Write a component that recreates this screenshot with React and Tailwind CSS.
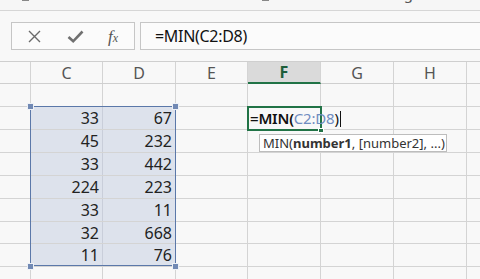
import React from "react";

const cols = [
  { k: "C", w: "w-[72px]" },
  { k: "D", w: "w-[73px]" },
  { k: "E", w: "w-[72px]" },
  { k: "F", w: "w-[73px]" },
  { k: "G", w: "w-[73px]" },
  { k: "H", w: "w-[73px]" },
];

const data = [
  null,
  ["33", "67"],
  ["45", "232"],
  ["33", "442"],
  ["224", "223"],
  ["33", "11"],
  ["32", "668"],
  ["11", "76"],
  null,
];

const rowH = [
  "h-[23px]",
  "h-[23px]",
  "h-[23px]",
  "h-[23px]",
  "h-[23px]",
  "h-[23px]",
  "h-[22px]",
  "h-[23px]",
  "h-[23px]",
];

function Row({ i }) {
  const d = data[i];
  const sel = i >= 1 && i <= 7;
  return (
    <div className={`flex ${rowH[i]} border-b border-[#d4d4d4]`}>
      <div className="w-[31px] shrink-0 border-r border-[#d4d4d4]" />
      {cols.map((c, ci) => {
        const inSel = sel && ci < 2;
        return (
          <div
            key={c.k}
            className={`${c.w} shrink-0 border-r ${
              inSel ? "bg-[#dde2ec] border-[#c9ceda]" : "border-[#d4d4d4]"
            } flex items-center justify-end pr-[3px] text-[16px] leading-none text-[#222]`}
          >
            {inSel ? d[ci] : ""}
          </div>
        );
      })}
      <div className="flex-1" />
    </div>
  );
}

export default function App() {
  return (
    <div
      className="relative w-[480px] h-[279px] overflow-hidden bg-[#f8f8f8] text-[#222]"
      style={{ fontFamily: '"Noto Sans", "Open Sans", sans-serif' }}
    >
      {/* ribbon bottom */}
      <div className="relative h-[11px] border-b border-[#d6d6d6] bg-[#f6f6f6] overflow-hidden">
        <div className="flex items-end h-full -mt-[9px]">
          <div className="w-[22px]" />
          <div className="w-[7px] h-[7px] border-r border-b border-[#888]" />
          <div className="w-[101px]" />
          <span className="text-[15px] leading-none text-[#555]">Font</span>
          <div className="w-[100px]" />
          <div className="w-[7px] h-[7px] border-r border-b border-[#888]" />
          <div className="w-[118px]" />
          <span className="text-[15px] leading-none text-[#555]">Alignment</span>
        </div>
      </div>
      {/* formula bar */}
      <div className="flex h-[51px] pt-[11px] pb-[12px] pl-[11px] gap-[5px] border-b border-[#cfcfcf]">
        <div className="w-[124px] h-[28px] border border-[#c6c6c6] bg-[#fbfbfb] flex items-center">
          <svg width="15" height="15" viewBox="0 0 15 15" className="ml-[15px]">
            <path d="M2 2 L13 13 M13 2 L2 13" stroke="#6a6a6a" strokeWidth="1.4" fill="none" />
          </svg>
          <svg width="17" height="15" viewBox="0 0 17 15" className="ml-[25px]">
            <path d="M1.5 8 L6.2 12.3 L15.5 2.5" stroke="#707070" strokeWidth="2.6" fill="none" />
          </svg>
          <span
            className="ml-[24px] italic text-[17px] leading-none text-[#555]"
            style={{ fontFamily: '"Liberation Serif", serif' }}
          >
            f<span className="text-[12px]">x</span>
          </span>
        </div>
        <div className="flex-1 h-[28px] border border-r-0 border-[#c6c6c6] bg-[#fbfbfb] flex items-center pl-[14px] text-[16px] tracking-[-0.3px] leading-none text-[#111]">
          =MIN(C2:D8)
        </div>
      </div>
      {/* column headers */}
      <div className="flex h-[22px] border-b border-[#cfcfcf]">
        <div className="w-[31px] shrink-0 border-r border-[#d4d4d4]" />
        {cols.map((c) =>
          c.k === "F" ? (
            <div
              key={c.k}
              className={`${c.w} shrink-0 border-r border-[#d4d4d4] bg-[#dadada] border-b-2 border-b-[#217346] -mb-[1px] flex items-center justify-center text-[16px] font-bold text-[#1d5e3a] leading-none`}
            >
              {c.k}
            </div>
          ) : (
            <div
              key={c.k}
              className={`${c.w} shrink-0 border-r border-[#d4d4d4] flex items-center justify-center text-[16px] text-[#555] leading-none`}
            >
              {c.k}
            </div>
          )
        )}
        <div className="flex-1" />
      </div>
      {/* rows */}
      <div className="relative">
        {data.map((_, i) => (
          <Row key={i} i={i} />
        ))}
        {/* selection border */}
        <div className="absolute left-[30px] top-[22px] w-[146px] h-[160px] border-[1.5px] border-[#5b78a9]" />
        {[
          "left-[27px] top-[19px]",
          "left-[172px] top-[19px]",
          "left-[27px] top-[179px]",
          "left-[172px] top-[179px]",
        ].map((p) => (
          <div key={p} className={`absolute ${p} w-[7px] h-[7px] bg-[#7189b4] border border-[#eef1f6]`} />
        ))}
        {/* active cell */}
        <div className="absolute left-[247px] top-[22px] w-[75px] h-[25px] border-2 border-[#217346]" />
        <div className="absolute left-[318px] top-[44px] w-[6px] h-[5px] bg-[#217346] border border-white" />
        <div className="absolute left-[250px] top-[23px] h-[23px] flex items-center text-[15px] leading-none whitespace-nowrap tracking-[-0.2px]">
          <span className="font-semibold text-[#111]">=MIN(</span>
          <span className="text-[#6f8cc0]">C2:D8</span>
          <span className="text-[#111]">)</span>
          <span className="inline-block w-[1px] h-[16px] bg-[#111] ml-[1px]" />
        </div>
        {/* tooltip */}
        <div className="absolute left-[259px] top-[50px] w-[188px] h-[18px] bg-white border border-[#bdbdbd] flex items-center pl-[3px] text-[13px] leading-none text-[#333] whitespace-nowrap">
          MIN(<span className="font-bold">number1</span>, [number2], ...)
        </div>
      </div>
    </div>
  );
}
